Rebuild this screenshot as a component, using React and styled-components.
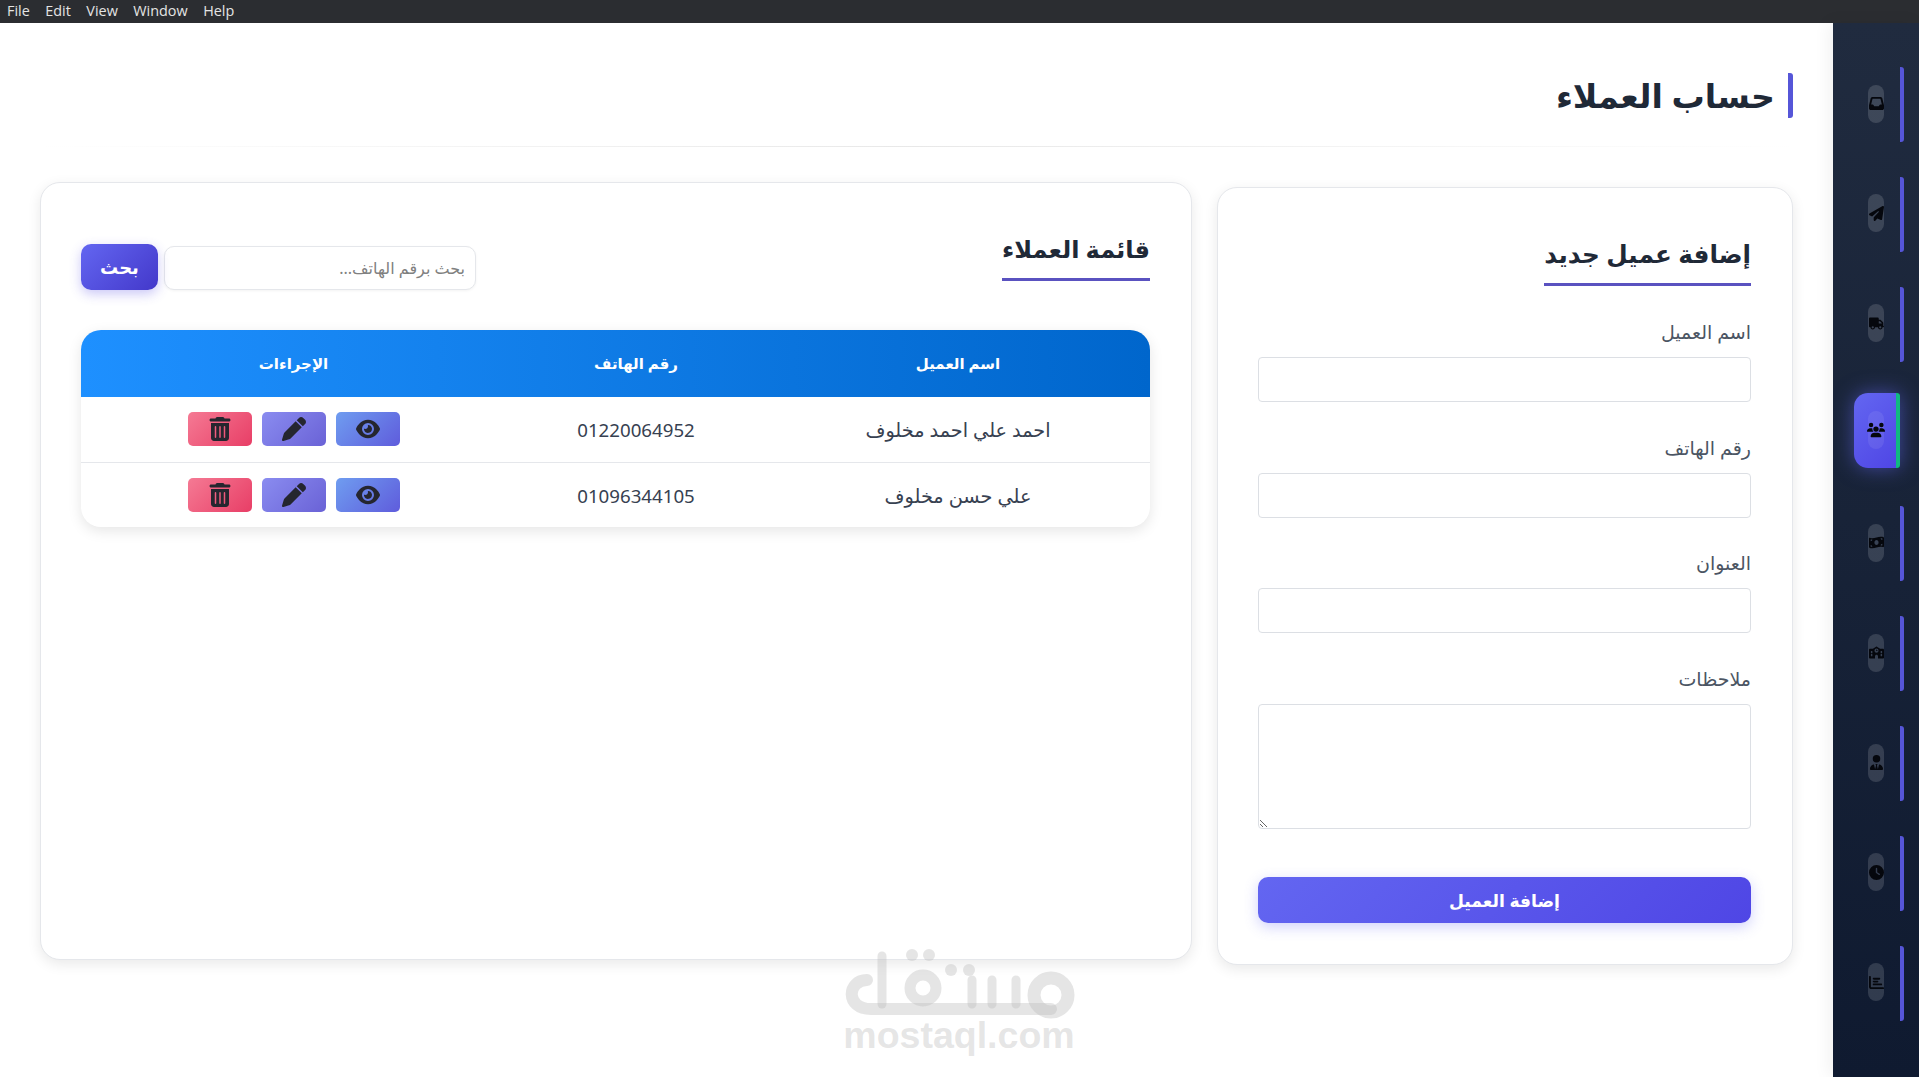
import React from 'react';
import styled, {createGlobalStyle} from 'styled-components';
import {
  FaInbox, FaPaperPlane, FaTruck, FaUsers, FaMoneyBillWave, FaSchool, FaUserTie, FaClock, FaChartBar,
  FaEye, FaPen, FaTrashCan,
} from 'react-icons/fa6';

const FONT = `"Noto Sans", "Open Sans", "DejaVu Sans", sans-serif`;

const GlobalStyle = createGlobalStyle`
  html, body { margin: 0; padding: 0; background: #fff; }
  body { font-family: ${FONT}; overflow: hidden; }
  * { box-sizing: border-box; }
`;

const navItems = [
  {Icon: FaInbox},
  {Icon: FaPaperPlane},
  {Icon: FaTruck},
  {Icon: FaUsers, active: true},
  {Icon: FaMoneyBillWave},
  {Icon: FaSchool},
  {Icon: FaUserTie},
  {Icon: FaClock},
  {Icon: FaChartBar},
];

const customers = [
  {name: 'احمد علي احمد مخلوف', phone: '01220064952'},
  {name: 'علي حسن مخلوف', phone: '01096344105'},
];

const fields = ['اسم العميل', 'رقم الهاتف', 'العنوان'];

export default function App() {
  return (
    <Window>
      <GlobalStyle />
      <MenuBar dir='ltr'>
        {['File', 'Edit', 'View', 'Window', 'Help'].map((m) => <MenuItem key={m}>{m}</MenuItem>)}
      </MenuBar>
      <Body dir='rtl'>
        <Sidebar>
          {navItems.map(({Icon, active}, i) => (
            <NavItem key={i} $active={active}>
              <NavPill $active={active}><Icon /></NavPill>
            </NavItem>
          ))}
        </Sidebar>
        <Main>
          <PageTitle>حساب العملاء</PageTitle>
          <Divider />
          <Columns>
            <FormCard>
              <CardTitle $size={24.7}>إضافة عميل جديد</CardTitle>
              <FormBody>
                {fields.map((f) => (
                  <Field key={f}>
                    <Label>{f}</Label>
                    <TextInput type='text' />
                  </Field>
                ))}
                <Field>
                  <Label>ملاحظات</Label>
                  <Notes />
                </Field>
                <SubmitButton type='button'>إضافة العميل</SubmitButton>
              </FormBody>
            </FormCard>
            <ListCard>
              <ListHeader>
                <CardTitle $size={24}>قائمة العملاء</CardTitle>
                <SearchBox>
                  <SearchInput type='text' placeholder='بحث برقم الهاتف...' />
                  <SearchButton type='button'>بحث</SearchButton>
                </SearchBox>
              </ListHeader>
              <Table>
                <HeadRow>
                  <HeadCell>اسم العميل</HeadCell>
                  <HeadCell>رقم الهاتف</HeadCell>
                  <HeadCell>الإجراءات</HeadCell>
                </HeadRow>
                {customers.map((c) => (
                  <Row key={c.phone}>
                    <Cell>{c.name}</Cell>
                    <Cell $size={18.7}>{c.phone}</Cell>
                    <Actions>
                      <ActionBtn $kind='view'><FaEye /></ActionBtn>
                      <ActionBtn $kind='edit'><FaPen /></ActionBtn>
                      <ActionBtn $kind='del'><FaTrashCan /></ActionBtn>
                    </Actions>
                  </Row>
                ))}
              </Table>
            </ListCard>
          </Columns>
        </Main>
      </Body>
      <Watermark dir='ltr'>
        <svg width='232' height='72' viewBox='64 28 232 72' fill='none' stroke='currentColor' strokeLinecap='round' strokeLinejoin='round'>
          <path d='M88 60C68 60 66 89 92 89H272' strokeWidth='12' />
          <path d='M103 36V84' strokeWidth='9' />
          <circle cx='144' cy='68' r='13' strokeWidth='11' />
          <path d='M193 60V84M213 60V84M237 60V84' strokeWidth='9' />
          <circle cx='272' cy='75' r='17' strokeWidth='13' />
          <g fill='currentColor' stroke='none'>
            <circle cx='133' cy='35' r='6' />
            <circle cx='150' cy='35' r='6' />
            <circle cx='172' cy='50' r='6' />
            <circle cx='190' cy='50' r='6' />
          </g>
        </svg>
        <WatermarkText>mostaql.com</WatermarkText>
      </Watermark>
    </Window>
  );
}

const Window = styled.div`
  width: 1919px;
  height: 1077px;
  position: relative;
  display: flex;
  flex-direction: column;
  overflow: hidden;
  background: #fff;
`;

const MenuBar = styled.div`
  height: 23px;
  flex: none;
  background: #2b2d31;
  display: flex;
  align-items: center;
  padding: 0 0 2px 7px;
  gap: 15.5px;
`;
const MenuItem = styled.span`
  font-family: "Open Sans", sans-serif;
  font-size: 14.4px;
  color: #e4e4e4;
`;

const Body = styled.div`
  flex: 1;
  min-height: 0;
  display: flex;
`;

const Sidebar = styled.nav`
  width: 86px;
  flex: none;
  background: linear-gradient(180deg, #202b3f 0%, #0f1a30 100%);
  box-shadow: -4px 0 16px rgba(0, 0, 0, 0.06);
  display: flex;
  flex-direction: column;
  align-items: flex-start;
  padding: 44px 15px 0 0;
  gap: 34.85px;
`;
const NavItem = styled.div`
  width: 50px;
  height: 75px;
  flex: none;
  display: flex;
  align-items: center;
  justify-content: center;
  padding-right: 2px;
  border-right: 4px solid ${(p) => (p.$active ? 'transparent' : '#5656d8')};
  border-radius: 3px;
  ${(p) => p.$active && `
    background: linear-gradient(135deg, #6366f1, #4f46e5);
    box-shadow: 0 0 20px rgba(99, 102, 241, 0.55);
    border-radius: 14px 3px 3px 14px;
    border-right: 4px solid #10b981;
    width: 46px;
    margin-right: 4px;
    padding-right: 0;
    padding-left: 2px;
    transform: translateY(-4px);
  `}
`;
const NavPill = styled.div`
  width: 16px;
  height: 38px;
  margin-bottom: ${(p) => (p.$active ? 0 : 2)}px;
  border-radius: 8px;
  background: rgba(255, 255, 255, ${(p) => (p.$active ? 0.08 : 0.14)});
  display: flex;
  align-items: center;
  justify-content: center;
  font-size: ${(p) => (p.$active ? '18px' : '15px')};
  color: #05070d;
  svg { flex: none; }
`;

const Main = styled.main`
  flex: 1;
  min-width: 0;
  padding: 50px 40px 0;
`;

const PageTitle = styled.h1`
  margin: 0;
  height: 45px;
  padding-right: 13px;
  border-right: 5px solid #5656d8;
  border-radius: 3px;
  display: flex;
  align-items: center;
  font-size: 33.2px;
  font-weight: 600;
  color: #1f2937;
`;
const Divider = styled.div`
  height: 1px;
  margin: 28px 0 35px;
  background: linear-gradient(90deg, transparent 0%, #e8e8e8 50%, transparent 100%);
`;

const Columns = styled.div`
  display: grid;
  grid-template-columns: 576px 1152px;
  gap: 25px;
  align-items: start;
`;

const Card = styled.section`
  background: #fff;
  border: 1px solid #e5e7eb;
  border-radius: 20px;
  box-shadow: 0 4px 14px rgba(0, 0, 0, 0.09);
`;
const FormCard = styled(Card)`
  margin-top: 5px;
  height: 778px;
  padding: 40px 41px 40px 40px;
`;
const ListCard = styled(Card)`
  height: 778px;
  padding: 40px 41px 40px 40px;
`;

const CardTitle = styled.h2`
  display: inline-block;
  margin: 0;
  height: 58px;
  padding-bottom: 4px;
  border-bottom: 3px solid #5a52c0;
  font-size: ${(p) => p.$size}px;
  line-height: 51px;
  font-weight: 600;
  color: #1f2937;
`;

const FormBody = styled.div`
  margin-top: 35px;
`;
const Field = styled.div`
  margin-bottom: 34.6px;
`;
const Label = styled.label`
  display: block;
  height: 24px;
  line-height: 22px;
  margin-bottom: 12px;
  font-size: 19px;
  color: #4b5563;
`;
const TextInput = styled.input`
  display: block;
  width: 100%;
  height: 45px;
  border: 1px solid #dcdfe4;
  border-radius: 4px;
  background: #fff;
  outline: none;
`;
const Notes = styled.textarea`
  display: block;
  width: 100%;
  height: 125px;
  border: 1px solid #dcdfe4;
  border-radius: 4px;
  background: #fff;
  outline: none;
  resize: vertical;
`;
const SubmitButton = styled.button`
  display: block;
  width: 100%;
  height: 46px;
  margin-top: 48px;
  padding: 2px 0 0;
  border: 0;
  border-radius: 10px;
  background: linear-gradient(135deg, #6366f1, #4f46e5);
  box-shadow: 0 4px 14px rgba(99, 102, 241, 0.3);
  color: #fff;
  font-family: ${FONT};
  font-size: 17.2px;
  font-weight: 600;
`;

const ListHeader = styled.div`
  display: flex;
  justify-content: space-between;
  align-items: flex-start;
  height: 107px;
`;
const SearchBox = styled.div`
  display: flex;
  align-items: center;
  gap: 6px;
  margin-top: 21px;
`;
const SearchInput = styled.input`
  width: 312px;
  height: 44px;
  margin-top: 2px;
  padding: 0 10px;
  border: 1px solid #e5e7eb;
  border-radius: 10px;
  outline: none;
  box-shadow: 0 1px 3px rgba(0, 0, 0, 0.05);
  font-family: ${FONT};
  font-size: 16px;
  &::placeholder { color: #808080; }
`;
const SearchButton = styled.button`
  width: 77px;
  height: 46px;
  border: 0;
  border-radius: 10px;
  background: linear-gradient(135deg, #6366f1, #4338ca);
  box-shadow: 0 4px 12px rgba(79, 70, 229, 0.3);
  color: #fff;
  font-family: ${FONT};
  font-size: 18px;
  font-weight: 700;
`;

const Table = styled.div`
  border-radius: 20px;
  background: #fff;
  box-shadow: 0 4px 14px rgba(0, 0, 0, 0.1);
  overflow: hidden;
`;
const HeadRow = styled.div`
  display: grid;
  grid-template-columns: 384px 260px 1fr;
  height: 67px;
  background: linear-gradient(90deg, #1e90ff 0%, #0066cc 100%);
`;
const HeadCell = styled.div`
  display: flex;
  align-items: center;
  justify-content: center;
  padding-bottom: 1px;
  color: #fff;
  font-size: 15px;
  font-weight: 600;
`;
const Cell = styled.div`
  display: flex;
  align-items: center;
  justify-content: center;
  font-size: ${(p) => p.$size || 19.3}px;
  color: #374151;
`;
const Actions = styled.div`
  display: flex;
  align-items: center;
  justify-content: center;
  gap: 10px;
`;
const Row = styled.div`
  display: grid;
  grid-template-columns: 384px 260px 1fr;
  height: 64px;
  &:nth-child(2) {
    height: 66px;
    border-bottom: 1px solid #e5e7eb;
    ${Actions} { padding-bottom: 1px; }
  }
`;
const actionBg = {
  view: 'linear-gradient(135deg, #6f9df0, #5f5cdc)',
  edit: 'linear-gradient(135deg, #8a8cf0, #6a62d6)',
  del: 'linear-gradient(135deg, #f57a94, #e83e66)',
};
const ActionBtn = styled.button`
  width: 64px;
  height: 34px;
  padding: 0;
  border: 0;
  border-radius: 5px;
  background: ${(p) => actionBg[p.$kind]};
  color: #25262f;
  font-size: 24px;
  display: flex;
  align-items: center;
  justify-content: center;
`;

const Watermark = styled.div`
  position: absolute;
  left: 843px;
  top: 948px;
  width: 232px;
  display: flex;
  flex-direction: column;
  align-items: center;
  color: rgba(190, 190, 190, 0.4);
  pointer-events: none;
`;
const WatermarkText = styled.div`
  margin-top: -3px;
  font-family: "Liberation Sans", Arial, sans-serif;
  font-weight: 700;
  font-size: 37.5px;
  line-height: 37px;
  white-space: nowrap;
`;
